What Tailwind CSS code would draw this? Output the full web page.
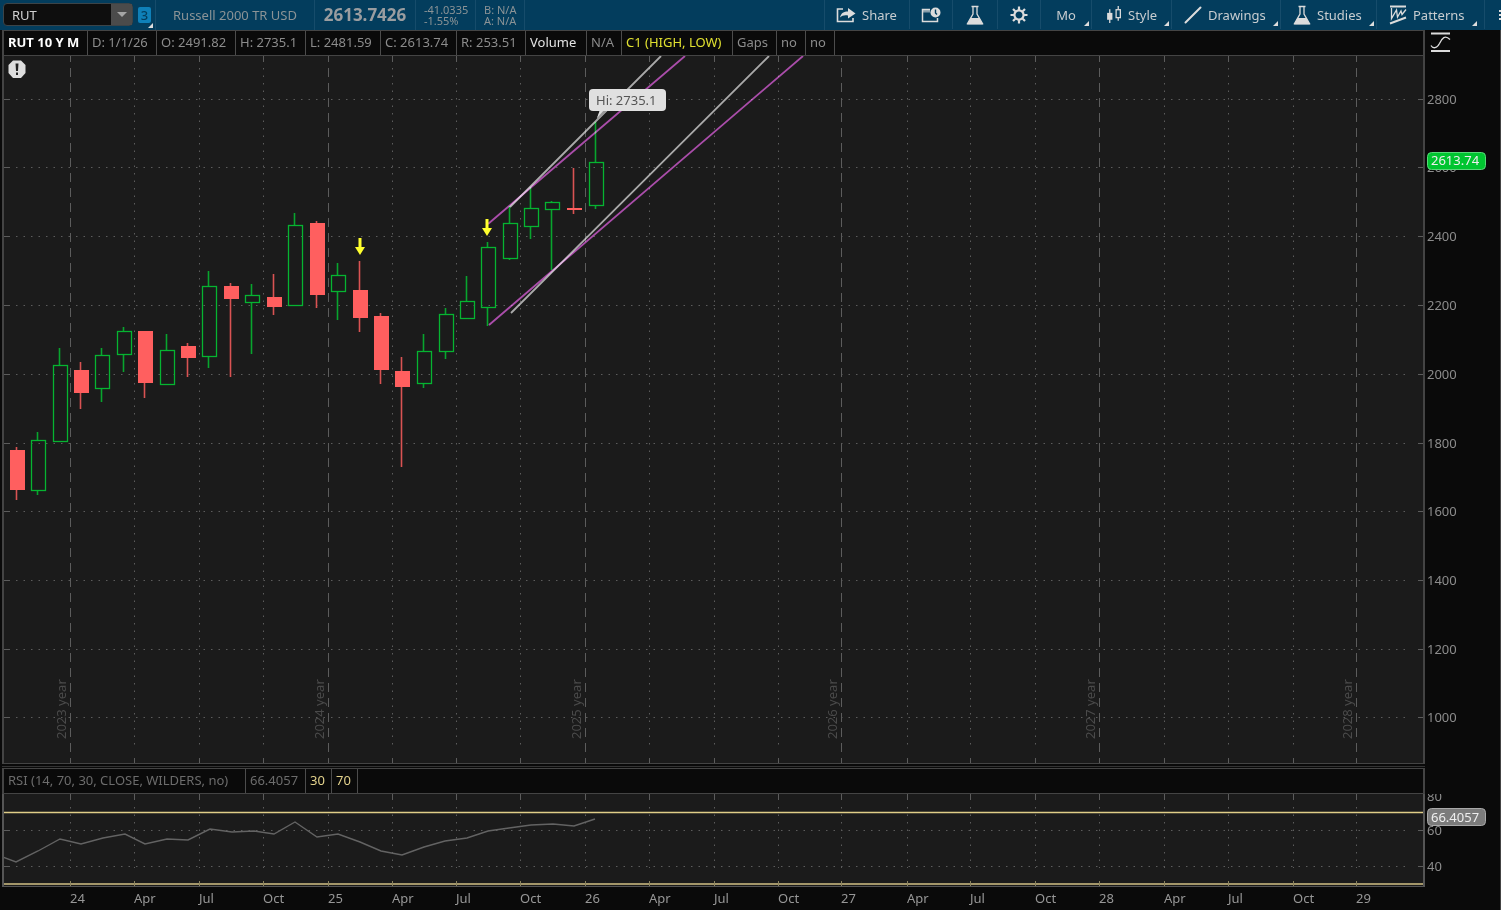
<!DOCTYPE html>
<html lang="en">
<head>
  <meta charset="UTF-8" />
  <title>RUT Chart</title>
  <meta name="viewport" content="width=device-width, initial-scale=1.0" />
  <script src="https://cdn.jsdelivr.net/npm/@tailwindcss/browser@4"></script>
</head>
<body class="bg-[#0a0a0a] text-[#8c8c8c] font-['Noto_Sans',sans-serif] text-[13px] leading-4 h-screen flex flex-col overflow-hidden">

  <!-- === TOOLBAR === -->
  <header class="h-[30px] shrink-0 bg-[#033d5d] flex items-stretch whitespace-nowrap overflow-hidden *:pb-px">
    <div class="w-[156px] shrink-0 flex items-center pl-[3px] border-r border-[#164c6b]">
      <div class="w-[130px] h-[23px] flex bg-[#0e0e0e] border border-[#3c4448] rounded-sm">
        <input aria-label="Symbol" value="RUT" class="flex-1 min-w-0 pl-2 bg-transparent text-[#d2d2d2] outline-none" />
        <button aria-label="Symbol list" class="w-[21px] bg-[#4b4b4b] flex items-center justify-center">
          <svg width="10" height="6"><path d="M0 0H10L5 5Z" fill="#a5a5a5" /></svg>
        </button>
      </div>
      <button aria-label="Link group 3" class="relative ml-[5px] w-[13px] h-4 rounded-xs bg-[#0f80b8] text-[#033d5d] font-medium leading-4">3
        <svg class="absolute left-[10px] top-[16px]" width="5" height="5"><path d="M5 0V5H0Z" fill="#ddd" /></svg>
      </button>
    </div>
    <div class="w-[159px] shrink-0 flex items-center justify-center border-r border-[#164c6b] text-[#8b9396]">Russell 2000 TR USD</div>
    <div class="w-[101px] shrink-0 flex items-center justify-center border-r border-[#164c6b] text-[#9a9da0] text-[17px] font-bold">2613.7426</div>
    <div class="w-[60px] shrink-0 pl-2 flex flex-col justify-center border-r border-[#164c6b] text-[#8b9396] text-[11px] leading-[11px]"><span>-41.0335</span><span>-1.55%</span></div>
    <div class="w-[49px] shrink-0 pl-2 flex flex-col justify-center border-r border-[#164c6b] text-[#8b9396] text-[11px] leading-[11px]"><span>B: N/A</span><span>A: N/A</span></div>
    <div class="flex-1 border-r border-[#164c6b]"></div>

    <nav class="flex shrink-0 text-[#c8cdd0]">
      <button class="w-[85px] flex items-center gap-[6px] pl-[11px] border-r border-[#164c6b]">
        <svg width="20" height="16" viewBox="0 0 20 16" fill="none" stroke="#dcdcdc" stroke-width="1.6"><path d="M7 2H1.5V14.5H17V11" /><path d="M4 10.500C5 6 8 4.500 12 4.500V1L19.500 6.500L12 11.500V8.500C8.500 8 6 8.500 4 10.500Z" fill="#dcdcdc" stroke="none" /></svg>
        Share
      </button>
      <button aria-label="Calendar" class="w-[43px] flex items-center justify-center border-r border-[#164c6b]">
        <svg width="20" height="16" viewBox="0 0 20 16"><path d="M9 2.500H1.500V14.500H16.500V11" fill="none" stroke="#dcdcdc" stroke-width="1.500" /><path d="M1 2H9V5.500H1Z" fill="#dcdcdc" opacity=".6" /><circle cx="14.500" cy="5.500" r="5" fill="#dcdcdc" /><path d="M14.500 2.500V6L16 7.500" fill="none" stroke="#033d5d" stroke-width="1.400" /></svg>
      </button>
      <button aria-label="Lab" class="w-[45px] flex items-center justify-center border-r border-[#164c6b]">
        <svg width="18" height="20" viewBox="0 0 18 20"><path d="M5.500 1.500H12.500M7 2V9L1.500 18.500H16.500L11 9V2" fill="none" stroke="#dcdcdc" stroke-width="1.300" /><path d="M4.500 13H13.500L17 19.500H1Z" fill="#dcdcdc" /></svg>
      </button>
      <button aria-label="Settings" class="w-[43px] flex items-center justify-center border-r border-[#164c6b]">
        <svg width="18" height="18" viewBox="-9 -9 18 18" stroke="#dcdcdc" fill="none"><circle r="4.600" stroke-width="2.200" /><path d="M0-8.500V-5M0 8.500V5M-8.500 0H-5M8.500 0H5M-6-6L-3.700-3.700M6-6L3.700-3.700M-6 6L-3.700 3.700M6 6L3.700 3.700" stroke-width="2.200" /></svg>
      </button>
      <button class="relative w-[51px] flex items-center justify-center border-r border-[#164c6b]">Mo
        <svg class="absolute right-[2px] bottom-[3px]" width="5" height="5"><path d="M5 0V5H0Z" fill="#ddd" /></svg>
      </button>
      <button class="relative w-[80px] flex items-center gap-[6px] pl-[14px] border-r border-[#164c6b]">
        <svg width="16" height="18" viewBox="0 0 15 17" fill="none" stroke="#dcdcdc"><path d="M3.500 3V16M11.500 0V3M11.500 11V14" stroke-width="1.200" /><rect x="1" y="6.500" width="5" height="6.500" fill="#dcdcdc" stroke="none" /><rect x="9.500" y="3.500" width="4" height="7.500" stroke-width="1.200" /></svg>
        Style
        <svg class="absolute right-[2px] bottom-[3px]" width="5" height="5"><path d="M5 0V5H0Z" fill="#ddd" /></svg>
      </button>
      <button class="relative w-[109px] flex items-center gap-[6px] pl-3 border-r border-[#164c6b]">
        <svg width="18" height="18" viewBox="0 0 18 18"><path d="M1.500 16.500L16.500 1.500" stroke="#dcdcdc" stroke-width="2" stroke-linecap="round" /></svg>
        Drawings
        <svg class="absolute right-[2px] bottom-[3px]" width="5" height="5"><path d="M5 0V5H0Z" fill="#ddd" /></svg>
      </button>
      <button class="relative w-[96px] flex items-center gap-[6px] pl-3 border-r border-[#164c6b]">
        <svg width="18" height="20" viewBox="0 0 18 20"><path d="M5.500 1.500H12.500M7 2V9L1.500 18.500H16.500L11 9V2" fill="none" stroke="#dcdcdc" stroke-width="1.300" /><path d="M4.500 13H13.500L17 19.500H1Z" fill="#dcdcdc" /></svg>
        Studies
        <svg class="absolute right-[2px] bottom-[3px]" width="5" height="5"><path d="M5 0V5H0Z" fill="#ddd" /></svg>
      </button>
      <button class="relative w-[108px] flex items-center gap-[6px] pl-3 border-r border-[#164c6b]">
        <svg width="18" height="20" viewBox="0 0 18 20" fill="none" stroke="#dcdcdc"><path d="M1 1.500H17M1 18.500L17 12.500" stroke-width="2" /><path d="M2.500 3V13.500L7.500 5L8.500 12L12 6L13 9.500L17 4.500" stroke-width="1.300" /></svg>
        Patterns
        <svg class="absolute right-[7px] bottom-[3px]" width="5" height="5"><path d="M5 0V5H0Z" fill="#ddd" /></svg>
      </button>
      <button aria-label="More" class="w-[16px] flex items-center justify-end overflow-hidden">
        <svg width="2" height="12"><path d="M0 2H2M0 6H2M0 10H2" stroke="#dcdcdc" stroke-width="2" /></svg>
      </button>
    </nav>
  </header>

  <main class="flex-1 min-h-0 flex">
    <section class="flex-1 min-w-0 flex flex-col pl-[2px]">

      <!-- === PRICE CHART === -->
      <div class="h-[26px] shrink-0 flex border-y border-x-2 border-[#444] whitespace-nowrap overflow-hidden *:flex *:items-center *:px-1 *:pb-[2px] *:border-r *:border-[#4c4c4c]">
        <span class="w-[84px] text-white font-bold">RUT 10 Y M</span>
        <span class="w-[69px]">D: 1/1/26</span>
        <span class="w-[79px]">O: 2491.82</span>
        <span class="w-[70px]">H: 2735.1</span>
        <span class="w-[75px]">L: 2481.59</span>
        <span class="w-[76px]">C: 2613.74</span>
        <span class="w-[69px]">R: 253.51</span>
        <span class="w-[61px] text-[#e4e4e4]">Volume</span>
        <span class="w-[35px]">N/A</span>
        <span class="w-[111px] text-[#e0e030]">C1 (HIGH, LOW)</span>
        <span class="w-[44px]">Gaps</span>
        <span class="w-[29px]">no</span>
        <span class="w-[29px]">no</span>
      </div>
      <div class="flex-1 min-h-0 bg-[#1b1b1b] border-x-2 border-b border-[#444]">
        <svg id="priceChart" class="block w-full h-full overflow-hidden"></svg>
      </div>
      <div class="h-1 shrink-0 pt-[2px]"><div class="h-px bg-[#333]"></div></div>

      <!-- === RSI === -->
      <div class="h-[26px] shrink-0 flex border-y border-x-2 border-[#444] whitespace-nowrap overflow-hidden text-[#6c6c6c] *:flex *:items-center *:px-1 *:pb-[2px] *:border-r *:border-[#4c4c4c]">
        <span class="w-[242px]">RSI (14, 70, 30, CLOSE, WILDERS, no)</span>
        <span class="w-[60px]">66.4057</span>
        <span class="w-[26px] text-[#e3d28c]">30</span>
        <span class="w-[26px] text-[#e3d28c]">70</span>
      </div>
      <div class="h-[93px] shrink-0 bg-[#1b1b1b] border-x-2 border-b border-[#555]">
        <svg id="rsiChart" class="block w-full h-full overflow-hidden"></svg>
      </div>
      <svg id="timeAxis" class="block w-full h-[23px] shrink-0"></svg>
    </section>

    <!-- === VALUE AXES === -->
    <aside class="w-[76px] shrink-0 flex flex-col border-r border-[#444]">
      <button aria-label="Scale settings" class="h-[26px] shrink-0 pl-[5px] pb-[2px] flex items-center">
        <svg width="22" height="21" viewBox="0 0 22 21" fill="none" stroke="#dcdcdc"><path d="M1 1.500H20M1 19H20" stroke-width="2" /><path d="M1 13.500C3 17 7 16.500 9.500 11.500C12 6 15 2.500 20 7.500" stroke-width="1.300" /></svg>
      </button>
      <svg id="priceAxis" class="block w-full flex-1 min-h-0"></svg>
      <svg id="rsiAxis" class="block w-full h-[116px] shrink-0 overflow-hidden"></svg>
    </aside>
  </main>

  <script>
    // x, high, body top, body bottom, low, up?
    const candles = [
      [17, 447, 450, 490, 500, 0], [38, 432, 440, 490, 495, 1], [60, 348, 365, 441, 442, 1],
      [81, 362, 370, 393, 409, 0], [102, 348, 355, 388, 402, 1], [124, 327, 331, 354, 372, 1],
      [145, 331, 331, 383, 398, 0], [167, 334, 350, 384, 385, 1], [188, 343, 346, 358, 377, 0],
      [209, 271, 286, 356, 368, 1], [231, 283, 286, 299, 377, 0], [252, 284, 295, 302, 354, 1],
      [274, 274, 297, 307, 315, 0], [295, 213, 225, 305, 305, 1], [317, 221, 223, 295, 308, 0],
      [338, 263, 275, 291, 320, 1], [360, 261, 290, 318, 332, 0], [381, 313, 316, 370, 384, 0],
      [402, 357, 371, 387, 467, 0], [424, 334, 351, 383, 388, 1], [446, 308, 314, 351, 359, 1],
      [467, 276, 301, 318, 319, 1], [488, 242, 247, 307, 326, 1], [510, 206, 223, 258, 260, 1],
      [531, 187, 208, 226, 239, 1], [552, 201, 202, 209, 270, 1], [574, 168, 208, 210, 214, 0],
      [596, 122, 162, 205, 209, 1]
    ];
    const rsi = "3,857 16,862 38,851 60,839 81,844 103,838 125,834 145,844 167,839 188,840 210,829 232,832 254,831 274,834 295,822 317,837 338,834 360,842 381,851 402,855 424,847 445,841 467,838 488,831 509,828 531,825 553,824 574,826 595,819";
    const months = [[70, "24"], [134, "Apr"], [199, "Jul"], [263, "Oct"], [328, "25"], [392, "Apr"], [456, "Jul"], [520, "Oct"],
      [585, "26"], [649, "Apr"], [714, "Jul"], [778, "Oct"], [841, "27"], [907, "Apr"], [970, "Jul"], [1035, "Oct"],
      [1099, "28"], [1164, "Apr"], [1228, "Jul"], [1293, "Oct"], [1356, "29"]];
    const prices = [[99, 2800], [167, 2600], [236, 2400], [305, 2200], [374, 2000], [443, 1800], [511, 1600], [580, 1400], [649, 1200], [717, 1000]];

    const line = (d, color, extra = "") => `<path d="${d}" fill="none" stroke="${color}" ${extra}/>`;
    const dots = 'stroke-dasharray="1.5 6"';

    function hGrid(y, right) {
      return line(`M4 ${y}.5H10M${right - 5} ${y}.5H${right}`, "#5c5c5c") + line(`M16 ${y}.5H${right - 18}`, "#5c5c5c", dots);
    }

    function drawPrice() {
      const svg = document.getElementById("priceChart");
      const right = Math.max(svg.clientWidth, 40) + 4;
      let s = "";
      prices.forEach(([y]) => s += hGrid(y, right));
      months.forEach(([x, label], i) => {
        if (i % 4 === 0) {
          s += line(`M${x}.5 53V764`, "#5c5c5c", 'stroke-dasharray="9 6"');
          s += `<text transform="translate(${x - 4} 739) rotate(-90)" fill="#4a4a4a">${2023 + i / 4} year</text>`;
        } else {
          s += line(`M${x}.5 56V62M${x}.5 758V764`, "#5c5c5c") + line(`M${x}.5 68V746`, "#5c5c5c", dots);
        }
      });
      candles.forEach(([x, hi, top, bottom, lo, up]) => {
        const color = up ? "#06b431" : "#ff5f5f";
        s += line(`M${x - .5} ${hi}V${top}M${x - .5} ${bottom}V${lo}`, up ? "#08a52e" : "#d95353", 'stroke-width="1.6"');
        s += up
          ? `<rect x="${x - 6.5}" y="${top + .5}" width="14" height="${bottom - top}" fill="none" stroke="${color}" stroke-width="1.3"/>`
          : `<rect x="${x - 7}" y="${top}" width="15" height="${bottom - top}" fill="${color}"/>`;
      });
      // regression channels
      s += '<g stroke-width="1.8" class="*:mix-blend-screen">';
      s += line("M510 207L661 56M511 313L769 56", "#a0a0a0");
      s += line("M488 224L685 56M489 325L803 56", "#a038a0");
      s += "</g>";
      [[360, 238], [487, 219]].forEach(([x, y]) => s += `<path d="M${x - 1.5} ${y}h3v9h3.500l-5 8l-5 -8h3.500z" fill="#ffff2e"/>`);
      s += '<path d="M600 110H608L596 121Z" fill="#999"/><path d="M600 110H604L597 118Z" fill="#e0e0e0"/>';
      s += '<rect x="589" y="89" width="77" height="22" rx="4" fill="#e0e0e0"/><text x="596" y="105" fill="#555">Hi: 2735.1</text>';
      s += '<path d="M13 60.500H21L25.500 65V73L21 78H13L8.500 73V65Z" fill="#dedede"/><path d="M15.500 63.500H18.500L18 71H16Z" fill="#222"/><rect x="16" y="72.500" width="2" height="2.500" fill="#222"/>';
      svg.innerHTML = `<g transform="translate(-4 -56)">${s}</g>`;
    }

    function drawRsi() {
      const svg = document.getElementById("rsiChart");
      const right = Math.max(svg.clientWidth, 40) + 4;
      let s = hGrid(830, right) + hGrid(866, right);
      months.forEach(([x]) => s += line(`M${x}.5 794V800`, "#5c5c5c") + line(`M${x}.5 807V868`, "#5c5c5c", dots));
      s += line(`M4 812.5H${right}`, "#e0cd88", 'stroke-width="1.6"') + line(`M4 884H${right}`, "#a4976a", 'stroke-width="2"');
      months.forEach(([x]) => s += line(`M${x}.5 881V886`, "#8c8460"));
      s += `<polyline points="${rsi}" fill="none" stroke="#636363" stroke-width="1.4"/>`;
      svg.innerHTML = `<g transform="translate(-4 -794)">${s}</g>`;
    }

    function drawAxes() {
      document.getElementById("timeAxis").innerHTML =
        months.map(([x, label]) => `<text x="${x - 2}" y="16" fill="#979797">${label}</text>`).join("");
      document.getElementById("priceAxis").innerHTML = '<g transform="translate(-1425 -56)">' +
        prices.map(([y, p]) => `<text x="1427" y="${y + 5}" fill="#8c8c8c">${p}</text>`).join("") +
        '<rect x="1427.5" y="152.5" width="58" height="17" rx="4" fill="#00c530" stroke="#58d878"/><text x="1431" y="165" fill="#eee">2613.74</text></g>';
      document.getElementById("rsiAxis").innerHTML = '<g transform="translate(-1425 -794)" fill="#8c8c8c">' +
        '<text x="1427" y="801">80</text><text x="1427" y="835">60</text><text x="1427" y="871">40</text>' +
        '<rect x="1427.5" y="808.5" width="58" height="17" rx="4" fill="#7b7b7b" stroke="#a8a8a8"/><text x="1431" y="822" fill="#eee">66.4057</text></g>';
    }

    drawAxes();
    drawPrice();
    drawRsi();
    new ResizeObserver(drawPrice).observe(document.getElementById("priceChart").parentElement);
    new ResizeObserver(drawRsi).observe(document.getElementById("rsiChart").parentElement);
  </script>
</body>
</html>
